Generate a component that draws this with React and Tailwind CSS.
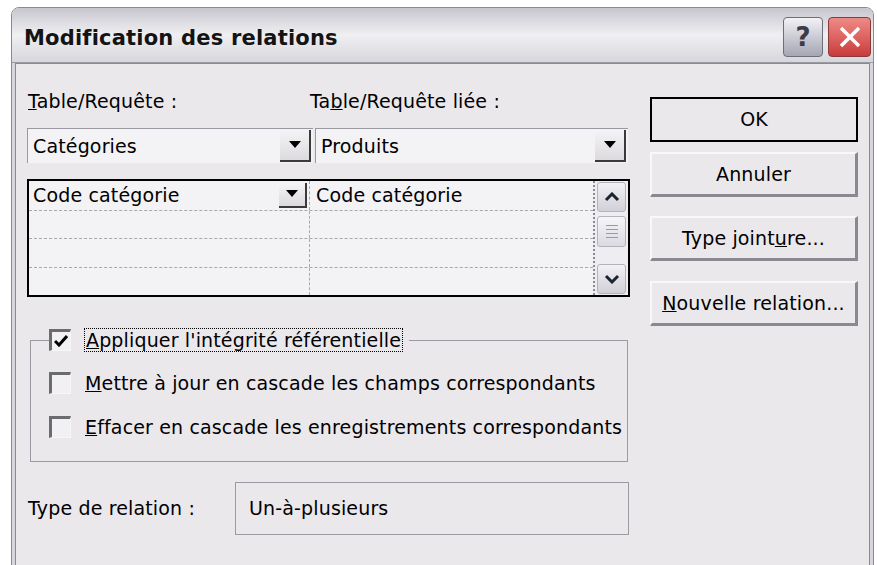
const ui = { fontFamily: '"DejaVu Sans", "Liberation Sans", sans-serif' };

// Small down triangle used by the combo boxes
const DropButton = ({ className = "" }) => (
  <div
    className={`flex items-center justify-center bg-gradient-to-b from-[#f4f3f5] to-[#dcdade] border-r-2 border-b-2 border-[#3a3a3a] ${className}`}
  >
    <svg width="12" height="8" viewBox="0 0 12 8">
      <path d="M0 0h12L6 7z" fill="#000" />
    </svg>
  </div>
);

const ScrollButton = ({ up }) => (
  <div className="h-[30px] w-[29px] flex items-center justify-center rounded-[3px] border border-[#b4b2ba] bg-gradient-to-b from-[#f2f1f4] to-[#d2d0d8]">
    <svg width="16" height="10" viewBox="0 0 16 10">
      <path
        d={up ? "M2 8l6-6 6 6" : "M2 2l6 6 6-6"}
        fill="none"
        stroke="#1c2430"
        strokeWidth="3"
      />
    </svg>
  </div>
);

const Checkbox = ({ checked }) => (
  <div className="w-[22px] h-[22px] shrink-0 border-t-[3px] border-l-[3px] border-t-[#6c6c70] border-l-[#6c6c70] border-b border-r border-b-[#f6f6f8] border-r-[#f6f6f8] bg-[#f1f0f3] flex items-center justify-center">
    {checked && (
      <svg width="14" height="12" viewBox="0 0 14 12">
        <path d="M1 6l4 4 8-9" fill="none" stroke="#000" strokeWidth="3" />
      </svg>
    )}
  </div>
);

const Button = ({ children, isDefault, className = "" }) => (
  <div
    className={`h-[45px] w-[208px] flex items-center justify-center text-black bg-[#ebe8ec] ${
      isDefault
        ? "border-2 border-black"
        : "border-t-2 border-l-2 border-t-[#f8f8fa] border-l-[#f8f8fa] border-b-[3px] border-r-[3px] border-b-[#8a8890] border-r-[#8a8890]"
    } ${className}`}
  >
    {children}
  </div>
);

export default function App() {
  return (
    <div className="w-[877px] h-[565px] bg-white overflow-hidden" style={ui}>
      <div className="ml-[11px] mt-[7px] w-[863px] h-[560px] flex flex-col border border-[#8a8a92] rounded-t-[8px] overflow-hidden">
        {/* title bar */}
        <div className="h-[55px] shrink-0 flex items-center justify-between pl-[12px] pr-[2px] bg-gradient-to-b from-[#c6c6ce] via-[#f0f0f3] to-[#d6d6dc] border-b border-[#9a9aa2]">
          <span className="text-[21px] font-bold text-[#141414] tracking-[0.2px] mt-[8px]">
            Modification des relations
          </span>
          <div className="flex gap-[5px] mt-[4px]">
            <div className="w-[40px] h-[40px] rounded-[4px] border border-[#6e6e7a] bg-gradient-to-b from-[#f2f2f6] to-[#a6a6b4] flex items-center justify-center text-[26px] font-bold text-[#3c3c46]">
              ?
            </div>
            <div className="w-[43px] h-[40px] rounded-[4px] border border-[#8a3a3a] bg-gradient-to-b from-[#ee8a86] to-[#c83a3c] flex items-center justify-center">
              <svg width="24" height="24" viewBox="0 0 24 24">
                <path d="M3 3l18 18M21 3L3 21" stroke="#fff" strokeWidth="3.5" />
              </svg>
            </div>
          </div>
        </div>

        {/* client area */}
        <div className="flex-1 bg-[#d8d6dc] px-[3px] pt-0">
          <div className="h-full bg-[#ebe8ec] border border-[#8a8890] flex pl-[11px] text-[19px] tracking-[0.15px] text-black">
            {/* left column */}
            <div className="w-[603px] flex flex-col pt-[25px]">
              <div className="h-[24px] flex items-center">
                <span className="w-[283px] pl-[1px]">
                  <u>T</u>able/Requête :
                </span>
                <span>
                  Ta<u>b</u>le/Requête liée :
                </span>
              </div>

              <div className="mt-[15px] h-[35px] flex">
                <div className="w-[286px] flex items-center border-t border-l border-[#9a98a0] bg-[#f3f2f4] pl-[5px] pr-[2px]">
                  <span className="flex-1">Catégories</span>
                  <DropButton className="w-[31px] h-[32px]" />
                </div>
                <div className="ml-[2px] w-[313px] flex items-center border-t border-l border-[#9a98a0] bg-[#f3f2f4] pl-[5px] pr-[2px]">
                  <span className="flex-1">Produits</span>
                  <DropButton className="w-[31px] h-[32px]" />
                </div>
              </div>

              {/* field grid */}
              <div className="mt-[16px] h-[118px] flex border-2 border-black bg-[#f3f2f4]">
                <div className="flex-1 flex flex-col">
                  {[0, 1, 2, 3].map((row) => (
                    <div
                      key={row}
                      className={`flex-1 flex ${row < 3 ? "border-b border-dashed border-[#a8a8ac]" : ""}`}
                    >
                      <div className="w-[281px] flex items-center border-r border-dashed border-[#a8a8ac] pl-[4px] pr-[2px]">
                        {row === 0 && (
                          <>
                            <span className="flex-1">Code catégorie</span>
                            <DropButton className="w-[28px] h-[25px]" />
                          </>
                        )}
                      </div>
                      <div className="flex-1 flex items-center pl-[6px]">
                        {row === 0 && "Code catégorie"}
                      </div>
                    </div>
                  ))}
                </div>
                <div className="w-[35px] flex flex-col items-center justify-between py-[1px] border-l-2 border-dotted border-[#8a8a90] bg-[#eeedf1]">
                  <ScrollButton up />
                  <div className="h-[31px] w-[29px] -mt-[14px] rounded-[3px] border border-[#b4b2ba] bg-gradient-to-b from-[#f6f5f8] to-[#dcdae2] flex flex-col items-center justify-center gap-[3px]">
                    <div className="w-[12px] h-[1px] bg-[#9a98a6]" />
                    <div className="w-[12px] h-[1px] bg-[#9a98a6]" />
                    <div className="w-[12px] h-[1px] bg-[#9a98a6]" />
                    <div className="w-[12px] h-[1px] bg-[#9a98a6]" />
                  </div>
                  <ScrollButton />
                </div>
              </div>

              {/* integrity options */}
              <fieldset className="mt-[30px] ml-[3px] w-[598px] h-[135px] border border-[#9c9aa2] pl-[18px]">
                <legend className="pr-[6px] flex items-center h-[26px]">
                  <Checkbox checked />
                  <span className="ml-[13px] px-[1px] border border-dotted border-black leading-[22px]">
                    <u>A</u>ppliquer l'intégrité référentielle
                  </span>
                </legend>
                <div className="mt-[18px] flex items-center h-[24px]">
                  <Checkbox />
                  <span className="ml-[14px]">
                    <u>M</u>ettre à jour en cascade les champs correspondants
                  </span>
                </div>
                <div className="mt-[20px] flex items-center h-[24px]">
                  <Checkbox />
                  <span className="ml-[14px]">
                    <u>E</u>ffacer en cascade les enregistrements correspondants
                  </span>
                </div>
              </fieldset>

              <div className="mt-[20px] h-[53px] flex items-center">
                <span className="w-[208px] pl-[1px]">Type de relation :</span>
                <div className="w-[394px] h-full flex items-center pl-[13px] border border-[#9c9aa2] bg-[#ebe8ec]">
                  Un-à-plusieurs
                </div>
              </div>
            </div>

            {/* right column */}
            <div className="ml-[20px] flex flex-col pt-[33px]">
              <Button isDefault>OK</Button>
              <Button className="mt-[10px]">Annuler</Button>
              <Button className="mt-[19px]">
                <span>
                  Type joint<u>u</u>re...
                </span>
              </Button>
              <Button className="mt-[20px]">
                <span>
                  <u>N</u>ouvelle relation...
                </span>
              </Button>
            </div>
          </div>
        </div>
      </div>
    </div>
  );
}
